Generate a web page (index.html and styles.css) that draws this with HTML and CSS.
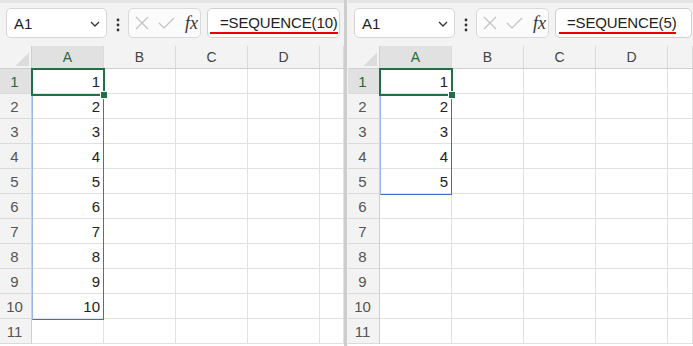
FILE: index.html
```html
<!DOCTYPE html>
<html lang="en">
<head>
    <meta charset="utf-8">
    <link rel="stylesheet" href="styles.css">
    <title>SEQUENCE</title>
</head>
<body>
<div class="app">
    <section class="pane">
        <div class="formula-bar">
            <div class="name-box">
                <span>A1</span>
                <svg class="chevron" width="10" height="6" viewBox="0 0 10 6"><polyline points="1,1 5,5 9,1" fill="none" stroke="#333" stroke-width="1.3"/></svg>
            </div>
            <div class="more">
                <svg width="4" height="14" viewBox="0 0 4 14"><circle cx="2" cy="2" r="1.4"/><circle cx="2" cy="7" r="1.4"/><circle cx="2" cy="12" r="1.4"/></svg>
            </div>
            <div class="edit-buttons">
                <svg width="14" height="14" viewBox="0 0 14 14"><path d="M1 1 L13 13 M13 1 L1 13" stroke="#c2c2c2" stroke-width="1.2"/></svg>
                <svg width="17" height="12" viewBox="0 0 17 12"><polyline points="1,6 6,11 16,1" fill="none" stroke="#c2c2c2" stroke-width="1.2"/></svg>
                <span class="fx">fx</span>
            </div>
            <div class="formula"><span class="formula-text">=SEQUENCE(10)</span></div>
        </div>
        <div class="sheet">
            <div class="corner"></div><div class="ch active">A</div><div class="ch">B</div><div class="ch">C</div><div class="ch">D</div><div class="ch"></div>
            <div class="rh active">1</div><div class="c n">1</div><div class="c"></div><div class="c"></div><div class="c"></div><div class="c"></div>
            <div class="rh">2</div><div class="c n">2</div><div class="c"></div><div class="c"></div><div class="c"></div><div class="c"></div>
            <div class="rh">3</div><div class="c n">3</div><div class="c"></div><div class="c"></div><div class="c"></div><div class="c"></div>
            <div class="rh">4</div><div class="c n">4</div><div class="c"></div><div class="c"></div><div class="c"></div><div class="c"></div>
            <div class="rh">5</div><div class="c n">5</div><div class="c"></div><div class="c"></div><div class="c"></div><div class="c"></div>
            <div class="rh">6</div><div class="c n">6</div><div class="c"></div><div class="c"></div><div class="c"></div><div class="c"></div>
            <div class="rh">7</div><div class="c n">7</div><div class="c"></div><div class="c"></div><div class="c"></div><div class="c"></div>
            <div class="rh">8</div><div class="c n">8</div><div class="c"></div><div class="c"></div><div class="c"></div><div class="c"></div>
            <div class="rh">9</div><div class="c n">9</div><div class="c"></div><div class="c"></div><div class="c"></div><div class="c"></div>
            <div class="rh">10</div><div class="c n">10</div><div class="c"></div><div class="c"></div><div class="c"></div><div class="c"></div>
            <div class="rh">11</div><div class="c"></div><div class="c"></div><div class="c"></div><div class="c"></div><div class="c"></div>
            <div class="spill spill-10"></div>
            <div class="selection"><span class="handle"></span></div>
        </div>
    </section>

    <div class="divider"></div>

    <section class="pane pane-right">
        <div class="formula-bar">
            <div class="name-box">
                <span>A1</span>
                <svg class="chevron" width="10" height="6" viewBox="0 0 10 6"><polyline points="1,1 5,5 9,1" fill="none" stroke="#333" stroke-width="1.3"/></svg>
            </div>
            <div class="more">
                <svg width="4" height="14" viewBox="0 0 4 14"><circle cx="2" cy="2" r="1.4"/><circle cx="2" cy="7" r="1.4"/><circle cx="2" cy="12" r="1.4"/></svg>
            </div>
            <div class="edit-buttons">
                <svg width="14" height="14" viewBox="0 0 14 14"><path d="M1 1 L13 13 M13 1 L1 13" stroke="#c2c2c2" stroke-width="1.2"/></svg>
                <svg width="17" height="12" viewBox="0 0 17 12"><polyline points="1,6 6,11 16,1" fill="none" stroke="#c2c2c2" stroke-width="1.2"/></svg>
                <span class="fx">fx</span>
            </div>
            <div class="formula"><span class="formula-text">=SEQUENCE(5)</span></div>
        </div>
        <div class="sheet">
            <div class="corner"></div><div class="ch active">A</div><div class="ch">B</div><div class="ch">C</div><div class="ch">D</div><div class="ch"></div>
            <div class="rh active">1</div><div class="c n">1</div><div class="c"></div><div class="c"></div><div class="c"></div><div class="c"></div>
            <div class="rh">2</div><div class="c n">2</div><div class="c"></div><div class="c"></div><div class="c"></div><div class="c"></div>
            <div class="rh">3</div><div class="c n">3</div><div class="c"></div><div class="c"></div><div class="c"></div><div class="c"></div>
            <div class="rh">4</div><div class="c n">4</div><div class="c"></div><div class="c"></div><div class="c"></div><div class="c"></div>
            <div class="rh">5</div><div class="c n">5</div><div class="c"></div><div class="c"></div><div class="c"></div><div class="c"></div>
            <div class="rh">6</div><div class="c"></div><div class="c"></div><div class="c"></div><div class="c"></div><div class="c"></div>
            <div class="rh">7</div><div class="c"></div><div class="c"></div><div class="c"></div><div class="c"></div><div class="c"></div>
            <div class="rh">8</div><div class="c"></div><div class="c"></div><div class="c"></div><div class="c"></div><div class="c"></div>
            <div class="rh">9</div><div class="c"></div><div class="c"></div><div class="c"></div><div class="c"></div><div class="c"></div>
            <div class="rh">10</div><div class="c"></div><div class="c"></div><div class="c"></div><div class="c"></div><div class="c"></div>
            <div class="rh">11</div><div class="c"></div><div class="c"></div><div class="c"></div><div class="c"></div><div class="c"></div>
            <div class="spill spill-5"></div>
            <div class="selection"><span class="handle"></span></div>
        </div>
    </section>
</div>
</body>
</html>
```

FILE: styles.css
```css
body {
    margin: 0;
    font-family: "Liberation Sans", Arial, sans-serif;
    color: #222;
    background-color: #fff;
}

.app {
    display: flex;
    width: 693px;
    height: 346px;
    overflow: hidden;
}

.pane {
    width: 344px;
    flex: none;
    display: flex;
    flex-direction: column;
}

.pane-right {
    width: 345px;
}

.divider {
    width: 1px;
    flex: none;
    background-color: #f3f3f3;
    border-left: 3px solid #cdcdcd;
}

/* formula bar */

.formula-bar {
    height: 46px;
    box-sizing: border-box;
    display: flex;
    align-items: flex-start;
    padding: 8px 4px 0 6px;
    background-color: #f3f3f3;
    box-shadow: inset 0 3px 0 #e4e4e4;
}

.pane-right .formula-bar {
    padding-right: 1px;
}

.name-box {
    width: 101px;
    height: 30px;
    box-sizing: border-box;
    display: flex;
    align-items: center;
    justify-content: space-between;
    padding: 0 6px 0 7px;
    background-color: #fff;
    border: 1px solid #d6d6d6;
    border-radius: 5px;
    font-size: 15px;
}

.chevron {
    margin-top: 1px;
}

.more {
    width: 21px;
    height: 30px;
    display: flex;
    align-items: center;
    justify-content: center;
    fill: #333;
}

.more svg {
    margin-top: 3px;
}

.edit-buttons {
    width: 73px;
    height: 30px;
    box-sizing: border-box;
    display: flex;
    align-items: center;
    gap: 9px;
    padding: 0 0 0 6px;
    background-color: #fbfbfb;
    border: 1px solid #d9d9d9;
    border-radius: 5px;
}

.fx {
    font-family: "Liberation Serif", "Times New Roman", serif;
    font-style: italic;
    font-size: 18px;
    color: #333;
    margin-left: 1px;
}

.formula {
    flex: 1;
    height: 30px;
    box-sizing: border-box;
    margin-left: 6px;
    padding-left: 2px;
    background-color: #fff;
    border: 1px solid #d0d0d0;
    border-radius: 5px;
    font-size: 15px;
}

.formula-text {
    display: inline-block;
    padding: 6px 0 2px 10px;
    line-height: 15px;
    border-bottom: 2px solid #e60000;
    letter-spacing: -0.15px;
}

.pane-right .formula-text {
    padding-left: 8px;
    margin-left: 1px;
}

/* grid */

.sheet {
    position: relative;
    flex: 1;
    display: grid;
    grid-template-columns: 32px 72px 72px 72px 72px 1fr;
    grid-template-rows: 23px repeat(11, 25px);
    background-color: #fff;
}

.corner {
    background-color: #f3f3f3;
    border-right: 1px solid #cfcfcf;
    border-bottom: 1px solid #cfcfcf;
    background-image: linear-gradient(135deg, transparent 62%, #dcdcdc 62%);
    background-size: 18px 18px;
    background-repeat: no-repeat;
    background-position: right 2px bottom 2px;
}

.ch {
    display: flex;
    align-items: center;
    justify-content: center;
    background-color: #f3f3f3;
    border-right: 1px solid #dadada;
    border-bottom: 1px solid #cfcfcf;
    font-size: 14px;
    color: #444;
}

.rh {
    display: flex;
    align-items: center;
    justify-content: center;
    padding-right: 2px;
    background-color: #f3f3f3;
    border-right: 1px solid #cfcfcf;
    border-bottom: 1px solid #dadada;
    font-size: 15px;
    color: #555;
}

.ch.active,
.rh.active {
    background-color: #e1e1e1;
    color: #1d6b3f;
}

.c {
    border-right: 1px solid #e1e1e1;
    border-bottom: 1px solid #e1e1e1;
}

.n {
    text-align: right;
    padding-right: 3px;
    font-size: 15px;
    line-height: 25px;
}

.spill {
    position: absolute;
    left: 32px;
    top: 23px;
    width: 72px;
    box-sizing: border-box;
    border: 1px solid #3a6fd0;
    border-left-color: #9cb6e6;
}

.spill-10 {
    height: 251px;
}

.spill-5 {
    height: 126px;
}

.selection {
    position: absolute;
    left: 31px;
    top: 22px;
    width: 74px;
    height: 28px;
    box-sizing: border-box;
    border: 2px solid #1f7145;
}

.handle {
    position: absolute;
    right: -5px;
    bottom: -5px;
    width: 6px;
    height: 6px;
    background-color: #1f7145;
    border: 1px solid #fff;
}
```
